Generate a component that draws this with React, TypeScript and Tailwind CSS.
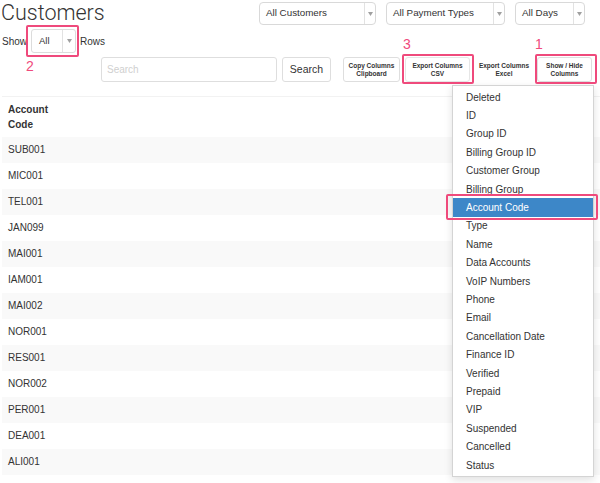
import React from "react";

const accountCodes = [
  "SUB001", "MIC001", "TEL001", "JAN099", "MAI001", "IAM001", "MAI002",
  "NOR001", "RES001", "NOR002", "PER001", "DEA001", "ALI001",
];

const columnItems = [
  "Deleted", "ID", "Group ID", "Billing Group ID", "Customer Group", "Billing Group",
  "Account Code", "Type", "Name", "Data Accounts", "VoIP Numbers", "Phone", "Email",
  "Cancellation Date", "Finance ID", "Verified", "Prepaid", "VIP", "Suspended",
  "Cancelled", "Status",
];

function Caret() {
  return (
    <svg width="5" height="4" viewBox="0 0 5 4">
      <path d="M0 0h5L2.5 4z" fill="#a0a0a0" />
    </svg>
  );
}

function Select({ label, className }: { label: string; className: string }) {
  return (
    <div className={`flex items-stretch border border-[#d9d9d9] rounded-[4px] bg-white ${className}`}>
      <span className="flex-1 flex items-center pl-[6px] text-[#333] whitespace-nowrap">{label}</span>
      <span className="w-[11px] flex items-center justify-center border-l border-[#e2e2e2]">
        <Caret />
      </span>
    </div>
  );
}

function ToolButton({ top, bottom, className }: { top: string; bottom: string; className: string }) {
  return (
    <div
      className={`h-[25px] flex flex-col items-center justify-center rounded-[3px] bg-white text-[6.5px] leading-[8px] font-bold text-[#333] ${className}`}
    >
      <span>{top}</span>
      <span>{bottom}</span>
    </div>
  );
}

export default function App() {
  return (
    <div className="relative w-[600px] h-[483px] overflow-hidden bg-white font-['Liberation_Sans',Arial,sans-serif] text-[#333]">
      {/* Title + filters */}
      <div className="flex items-start h-[27px]">
        <h1 className="pl-[1px] font-['Roboto',sans-serif] font-light text-[21.5px] leading-[26px] text-[#333]">Customers</h1>
        <div className="ml-auto mr-[15px] mt-[2px] flex gap-[10px] text-[9.8px]">
          <Select label="All Customers" className="w-[117px] h-[23px]" />
          <Select label="All Payment Types" className="w-[119px] h-[23px]" />
          <Select label="All Days" className="w-[70px] h-[23px]" />
        </div>
      </div>

      {/* Show rows */}
      <div className="flex items-center mt-[2px] h-[24px] pl-[2px] text-[10px]">
        <span>Show</span>
        <div className="ml-[4px] w-[45px] h-[24px] flex items-stretch border border-[#dcdcdc] rounded-[3px] bg-white">
          <span className="flex-1 flex items-center pl-[7px] text-[9.5px]">All</span>
          <span className="w-[13px] flex items-center justify-center border-l border-[#e2e2e2]">
            <Caret />
          </span>
        </div>
        <span className="ml-[4px]">Rows</span>
      </div>

      {/* Search + tools */}
      <div className="flex items-center mt-[4px] h-[25px]">
        <input
          placeholder="Search"
          className="ml-[101px] w-[176px] h-[25px] px-[5px] text-[10px] border border-[#dedede] rounded-[3px] bg-white placeholder:text-[#d0d0d0] outline-none"
        />
        <button className="ml-[5px] w-[49px] h-[25px] text-[10.5px] border border-[#dedede] rounded-[3px] bg-white">
          Search
        </button>
        <ToolButton top="Copy Columns" bottom="Clipboard" className="ml-[12px] w-[57px] border border-[#dedede]" />
        <ToolButton top="Export Columns" bottom="CSV" className="ml-[5px] w-[65px] border border-[#e6e6e6]" />
        <ToolButton top="Export Columns" bottom="Excel" className="ml-[5px] w-[58px]" />
        <ToolButton top="Show / Hide" bottom="Columns" className="ml-[4px] w-[55px] border border-[#dedede]" />
      </div>

      {/* Table */}
      <table className="mt-[14px] ml-[2px] w-[598px] text-[10px] border-collapse">
        <thead>
          <tr className="border-t border-[#f2f2f2]">
            <th className="h-[40px] pl-[6px] text-left font-bold leading-[15px] align-middle">
              <div className="w-[45px]">Account Code</div>
            </th>
          </tr>
        </thead>
        <tbody>
          {accountCodes.map((code, i) => (
            <tr key={code} className={i % 2 === 0 ? "bg-[#f9f9f9]" : "bg-white"}>
              <td className="h-[26px] pl-[6px] align-middle">{code}</td>
            </tr>
          ))}
        </tbody>
      </table>

      {/* Column chooser dropdown */}
      <div className="absolute left-[452px] top-[85px] w-[142px] py-[2px] bg-white border border-[#d4d4d4] shadow-[0_3px_8px_rgba(0,0,0,0.12)] text-[10px]">
        {columnItems.map((item) => (
          <div
            key={item}
            className={
              item === "Account Code"
                ? "h-[18.4px] flex items-center pl-[13px] bg-[#3d87c8] text-white"
                : "h-[18.4px] flex items-center pl-[13px] text-[#333]"
            }
          >
            {item}
          </div>
        ))}
      </div>

      {/* Annotations */}
      <div className="absolute left-[26px] top-[25px] w-[53px] h-[32px] border-2 border-[#ef4a7c] rounded-[2px]" />
      <div className="absolute left-[26px] top-[58px] text-[14px] leading-[16px] text-[#ef4a7c]">2</div>

      <div className="absolute left-[402px] top-[54px] w-[72px] h-[30px] border-2 border-[#ef4a7c] rounded-[2px]" />
      <div className="absolute left-[403px] top-[36px] text-[14px] leading-[16px] text-[#ef4a7c]">3</div>

      <div className="absolute left-[535px] top-[54px] w-[62px] h-[30px] border-2 border-[#ef4a7c] rounded-[2px]" />
      <div className="absolute left-[535px] top-[36px] text-[14px] leading-[16px] text-[#ef4a7c]">1</div>

      <div className="absolute left-[446px] top-[194px] w-[152px] h-[26px] border-2 border-[#ef4a7c] rounded-[2px]" />
    </div>
  );
}
